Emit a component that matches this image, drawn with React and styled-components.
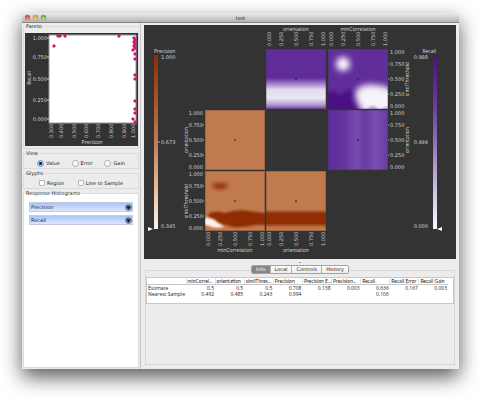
import React from "react";
import styled, { createGlobalStyle } from "styled-components";

const UI_FONT = '"DejaVu Sans", sans-serif';
const LABEL_FONT = '"Open Sans", sans-serif';

const GlobalStyle = createGlobalStyle`
  *, *::before, *::after { box-sizing: border-box; }
  html { background: #fff; }
  body {
    margin: 0;
    font: 5px/6px ${UI_FONT};
    color: #222;
  }
  button, input, select { font: inherit; color: inherit; margin: 0; padding: 0; }
`;

const Desktop = styled.div`
  min-height: 100vh;
  display: flex;
  padding: 13px 22px 31px;
`;

const Window = styled.div`
  flex: 1;
  min-width: 0;
  display: flex;
  flex-direction: column;
  background: #ececec;
  border-radius: 2px 2px 0 0;
  box-shadow: 0 8px 20px rgba(0, 0, 0, 0.66);
`;

const TitleBar = styled.header`
  height: 10px;
  display: grid;
  grid-template-columns: 1fr auto 1fr;
  align-items: center;
  padding: 0 3px;
  background: linear-gradient(#ececec, #b4b4b4);
  border-bottom: 1px solid #858585;
  border-radius: 2px 2px 0 0;
`;

const Lights = styled.div`
  display: flex;
  gap: 3px;
`;

const Light = styled.button`
  width: 5px;
  height: 5px;
  border: 0;
  border-radius: 50%;
  background: radial-gradient(circle at 50% 75%, ${(p) => p.$glow}, ${(p) => p.$color} 60%);
  box-shadow: 0 0 1px #444;
`;

const Title = styled.h1`
  margin: 0;
  font: 5px/8px ${UI_FONT};
`;

const Body = styled.div`
  flex: 1;
  display: grid;
  grid-template-columns: 119px minmax(0, 1fr);
`;

const Sidebar = styled.aside`
  display: flex;
  flex-direction: column;
  padding: 0 1px 1px;
  border-right: 1px solid #c6c6c6;
`;

const Group = styled.fieldset`
  min-width: 0;
  margin: 0 0 1px;
  border: 1px solid #dadada;
  padding: ${(p) => (p.$roomy ? "4px 0 2px 1px" : "3px 1px 1px")};
`;

const HistogramGroup = styled(Group)`
  flex: 1;
  margin: 0;
  background: #fff;
`;

const Legend = styled.legend`
  padding: 0 1px;
  line-height: 6px;
`;

const Choices = styled.div`
  display: flex;
  justify-content: space-between;
  padding: 0 ${(p) => p.$inset}px;
`;

const Choice = styled.label`
  display: flex;
  align-items: center;
  gap: 2px;
  height: 8px;
`;

const Radio = styled.input`
  appearance: none;
  width: 7px;
  height: 7px;
  border: 1px solid #aaa;
  border-radius: 50%;
  background: linear-gradient(#fff, #f2f2f2);
  &:checked {
    border-color: #6a94c6;
    background: radial-gradient(circle, #123 0 1px, #a8d4f8 2px);
  }
`;

const Check = styled.input`
  appearance: none;
  width: 6px;
  height: 6px;
  border: 1px solid #b4b4b4;
  border-radius: 1px;
  background: #fff;
  &:checked { background: #6ea8e8; }
`;

const ComboList = styled.div`
  display: flex;
  flex-direction: column;
  gap: 3px;
  padding: 3px 4px;
`;

const ComboBox = styled.div`
  position: relative;
`;

const Combo = styled.select`
  appearance: none;
  display: block;
  width: 100%;
  height: 10px;
  padding: 0 12px 0 1px;
  border: 1px solid #c2cbe2;
  border-radius: 0;
  background: linear-gradient(#a9c5fa, #dbe7ff);
`;

const ComboArrow = styled.svg`
  position: absolute;
  right: 1px;
  top: 2px;
  width: 7px;
  height: 7px;
  pointer-events: none;
`;

const Main = styled.main`
  display: flex;
  flex-direction: column;
  padding: 2px 3px 4px 3px;
`;

const Chart = styled.svg`
  display: block;
  width: 100%;
  height: auto;
  background: #333;
`;

const Splitter = styled.div`
  height: 6px;
  display: flex;
  justify-content: center;
  align-items: center;
  &::after {
    content: "";
    width: 2px;
    height: 1px;
    background: #999;
  }
`;

const TabArea = styled.section`
  flex: 1;
  display: flex;
  flex-direction: column;
  margin: 0 1px;
`;

const Tabs = styled.div`
  z-index: 1;
  align-self: center;
  display: flex;
  height: 9px;
  margin-bottom: -4px;
  border: 1px solid #a2a2a2;
  border-radius: 2px;
  overflow: hidden;
`;

const Tab = styled.button`
  padding: 0 4px;
  border: 0;
  border-left: 1px solid #b0b0b0;
  line-height: 7px;
  color: ${(p) => (p.$active ? "#fff" : "#222")};
  background: ${(p) => (p.$active ? "#858585" : "linear-gradient(#fff, #ececec)")};
  &:first-child { border-left: 0; }
`;

const TabPanel = styled.div`
  flex: 1;
  border: 1px solid #d6d6d6;
  padding-top: 6px;
`;

const TableFrame = styled.div`
  height: 27px;
  padding-right: 5px;
  background: #fff;
  border: 1px solid #c8c8c8;
`;

const Table = styled.table`
  width: 100%;
  table-layout: fixed;
  border-collapse: collapse;
  font: 5px/6px ${LABEL_FONT};
  color: #222;
  th, td { padding: 0 1px 0 0; font-weight: 400; white-space: nowrap; }
  thead th {
    height: 6px;
    padding: 0 0 0 1px;
    font-family: Lato, sans-serif;
    text-align: left;
    border-bottom: 1px solid #c8c8c8;
    border-left: 1px solid #e2e2e2;
  }
  thead th:first-child { width: 39px; border-left: 0; }
  tbody th { text-align: left; padding-left: 1px; }
  tbody td { text-align: right; }
`;

const Tick = styled.text`
  font: 5px ${UI_FONT};
  fill: #d4d4d4;
  text-anchor: ${(p) => p.$anchor || "start"};
`;

const AxisTitle = styled.text`
  font: 5px ${LABEL_FONT};
  fill: #dedede;
  text-anchor: ${(p) => p.$anchor || "middle"};
`;

const Dot = styled.path`
  fill: #d5106c;
`;

const UpText = ({ as: Kind = Tick, x, y, children, anchor }) => (
  <Kind $anchor={anchor} transform={`translate(${x + 2} ${y}) rotate(-90)`}>
    {children}
  </Kind>
);

const paretoX = [[26, "0.300"], [36, "0.400"], [49, "0.500"], [61, "0.600"], [73, "0.700"], [86, "0.800"], [99, "0.900"], [108, "1.000"]];
const paretoY = [[5, "1.000"], [24, "0.750"], [46, "0.500"], [67, "0.250"], [86, "0.000"]];
const samples = [
  [29, 13], [33, 3], [35, 3], [40, 3], [94, 3], [109, 5], [110, 7], [109, 9],
  [110, 11], [109, 13], [110, 15], [108, 17], [110, 21], [110, 26], [110, 42],
  [110, 46], [110, 68], [110, 76], [110, 80], [108, 86], [110, 89],
];

function ParetoChart() {
  return (
    <Chart viewBox="0 0 113 113" role="img" aria-label="Recall against Precision">
      <rect x="24" y="2" width="87" height="88" fill="#fff" stroke="#999" strokeWidth="1" />
      {paretoY.map(([y, t]) => (
        <g key={t}>
          <Tick $anchor="end" x="22" y={y + 2}>{t}</Tick>
          <path d={`M22 ${y}h2`} stroke="#ccc" />
        </g>
      ))}
      {paretoX.map(([x, t]) => <UpText key={t} x={x} y={105}>{t}</UpText>)}
      <UpText as={AxisTitle} x={4} y={45}>Recall</UpText>
      <AxisTitle x="67" y="111">Precision</AxisTitle>
      {samples.map(([x, y]) => (
        <Dot key={`${x}-${y}`} d={`M${x - 2} ${y}l1 -1l1 -1l1 1l1 1l-1 1l-1 1l-1 -1z`} />
      ))}
    </Chart>
  );
}

const ticks = ["0.000", "0.250", "0.500", "0.750", "1.000"];
const offsets = [3, 15, 30, 45, 57];

const ColumnAxis = ({ x, y, titleY, title }) => (
  <g>
    {ticks.map((t, i) => <UpText key={t} x={x + offsets[i]} y={y}>{t}</UpText>)}
    <AxisTitle x={x + 30} y={titleY}>{title}</AxisTitle>
  </g>
);

const RowAxis = ({ x, y, titleX, title, anchor }) => (
  <g>
    {ticks.map((t, i) => (
      <Tick key={t} $anchor={anchor} x={x} y={y + 62 - offsets[i]}>{t}</Tick>
    ))}
    {[15, 30, 45].map((d) => (
      <path key={d} d={`M${anchor === "end" ? x : x - 2} ${y + d}h1`} stroke="#aaa" />
    ))}
    <UpText as={AxisTitle} x={titleX} y={y + 30}>{title}</UpText>
  </g>
);

const Cell = ({ x, y, fill, children }) => (
  <g transform={`translate(${x} ${y})`}>
    <g clipPath="url(#cell)">
      <rect width="60" height="60" fill={fill} />
      {children}
    </g>
    <rect x="0.5" y="0.5" width="59" height="59" fill="none" stroke="#333" strokeOpacity="0.25" />
    <path d="M29 30h2M30 29v2" stroke="#222" strokeOpacity="0.6" />
  </g>
);

const Gradient = ({ id, horizontal, stops }) => (
  <linearGradient id={id} x1="0" y1="0" x2={horizontal ? 1 : 0} y2={horizontal ? 0 : 1}>
    {stops.map(([o, c]) => <stop key={o} offset={o} stopColor={c} />)}
  </linearGradient>
);

const Blur = ({ id, amount }) => (
  <filter id={id} x="-50%" y="-50%" width="200%" height="200%" colorInterpolationFilters="sRGB">
    <feGaussianBlur stdDeviation={amount} />
  </filter>
);

function ResponseMatrix() {
  return (
    <Chart viewBox="0 0 312 234" role="img" aria-label="Precision and Recall response matrix">
      <defs>
        <clipPath id="cell"><rect width="60" height="60" /></clipPath>
        <Blur id="soft" amount={3} />
        <Blur id="medium" amount={2} />
        <Blur id="crisp" amount={1} />
        <Gradient id="precisionBar" stops={[[0, "#8a2e06"], [0.3, "#ad5a31"], [0.5, "#c47a52"], [0.8, "#edc5a6"], [1, "#fff3e8"]]} />
        <Gradient id="recallBar" stops={[[0, "#48117f"], [0.3, "#6b3ea2"], [0.5, "#8f71b8"], [0.8, "#d3c9e2"], [1, "#fbf9fd"]]} />
        <Gradient id="recallBand" stops={[[0, "#602d9a"], [0.48, "#5f2c99"], [0.58, "#9f84c7"], [0.68, "#e3daef"], [0.82, "#ebe5f4"], [0.92, "#b9a4d8"], [1, "#7343ad"]]} />
        <Gradient id="recallWaves" horizontal stops={[[0, "#602d9a"], [0.28, "#6535a0"], [0.48, "#764dae"], [0.62, "#693aa4"], [0.78, "#784fb1"], [0.92, "#6e42a8"], [1, "#6939a2"]]} />
        <Gradient id="precisionBand" stops={[[0, "#c1794e"], [0.64, "#c1794e"], [0.71, "#912e04"], [0.87, "#902c02"], [0.94, "#bd7447"], [1, "#c37e50"]]} />
      </defs>

      <AxisTitle $anchor="start" x="10" y="28">Precision</AxisTitle>
      <rect x="10" y="30" width="4" height="174" fill="url(#precisionBar)" />
      <Tick x="17" y="34">1.000</Tick>
      <Tick x="17" y="119">0.673</Tick>
      <Tick x="17" y="203">0.345</Tick>
      <path d="M14 117h2" stroke="#aaa" />
      <path d="M4 202L9 204L4 206z" fill="#fff" />

      <AxisTitle $anchor="end" x="292" y="28">Recall</AxisTitle>
      <rect x="289" y="30" width="4" height="174" fill="url(#recallBar)" />
      <Tick $anchor="end" x="284" y="34">0.988</Tick>
      <Tick $anchor="end" x="284" y="119">0.494</Tick>
      <Tick $anchor="end" x="284" y="203">0.000</Tick>
      <path d="M298 202L293 204L298 206z" fill="#fff" />

      <ColumnAxis x={122} y={21} titleY={6} title="orientation" />
      <ColumnAxis x={184} y={21} titleY={6} title="minCorrelation" />
      <RowAxis x={246} y={24} titleX={263} title="similThreshold" />
      <RowAxis x={246} y={85} titleX={263} title="orientation" />
      <RowAxis x={59} y={85} titleX={42} title="orientation" anchor="end" />
      <RowAxis x={59} y={146} titleX={42} title="similThreshold" anchor="end" />
      <ColumnAxis x={61} y={221} titleY={227} title="minCorrelation" />
      <ColumnAxis x={122} y={221} titleY={227} title="orientation" />

      <Cell x={122} y={24} fill="url(#recallBand)" />
      <Cell x={184} y={24} fill="#602d9a">
        <g filter="url(#medium)">
          <path d="M-4 46Q5 38 12 47Q20 38 26 42L32 64H-4z" fill="#4a1085" />
        </g>
        <circle cx="15" cy="15" r="7" fill="#fff" filter="url(#soft)" />
        <path d="M30 39Q38 34 48 36Q56 36 68 42V70H40Q30 57 28 50Q26 43 30 39z" fill="#f6f3fa" filter="url(#soft)" />
        <path d="M38 61Q45 53 51 61M53 61Q58 55 64 61" fill="#b8a4d8" filter="url(#crisp)" />
      </Cell>
      <Cell x={184} y={85} fill="url(#recallWaves)" />
      <Cell x={61} y={85} fill="#c1794e" />
      <Cell x={61} y={146} fill="#c1794e">
        <ellipse cx="15" cy="15" rx="8" ry="3" fill="#902c02" filter="url(#medium)" />
        <g filter="url(#crisp)">
          <path d="M3 43Q10 39 20 42Q32 38 44 40Q54 41 64 43V54H50Q38 57 28 56L14 52L4 46z" fill="#902c02" />
          <path d="M-3 47Q8 46 12 51Q18 55 19 56Q9 58 4 55L-3 53z" fill="#fff4e8" />
        </g>
      </Cell>
      <Cell x={122} y={146} fill="url(#precisionBand)" />
    </Chart>
  );
}

const Histogram = ({ name }) => (
  <ComboBox>
    <Combo aria-label={`${name} histogram`} defaultValue={name}>
      <option>Precision</option>
      <option>Recall</option>
    </Combo>
    <ComboArrow viewBox="0 0 7 7" aria-hidden="true">
      <circle cx="3.5" cy="3.5" r="3" fill="#7d93bd" stroke="#4d6085" strokeWidth="0.7" />
      <path d="M1.3 2.2h4.4L3.5 5.7z" fill="#0b1220" />
    </ComboArrow>
  </ComboBox>
);

const headers = ["minCorrel...", "orientation", "similThres...", "Precision", "Precision E...", "Precision...", "Recall", "Recall Error", "Recall Gain"];
const rows = [
  ["Estimate", "0.5", "0.5", "0.5", "0.708", "0.138", "0.003", "0.636", "0.167", "0.003"],
  ["Nearest Sample", "0.492", "0.485", "0.243", "0.994", "", "", "0.106", "", ""],
];

export default function App() {
  return (
    <>
      <GlobalStyle />
      <Desktop>
        <Window>
          <TitleBar>
            <Lights>
              <Light aria-label="Close" $color="#d9433c" $glow="#ff9c92" />
              <Light aria-label="Minimize" $color="#dd9230" $glow="#ffe08a" />
              <Light aria-label="Zoom" $color="#6aa844" $glow="#c4f09a" />
            </Lights>
            <Title>test</Title>
          </TitleBar>
          <Body>
            <Sidebar>
              <Group $roomy>
                <Legend>Pareto</Legend>
                <ParetoChart />
              </Group>
              <Group>
                <Legend>View</Legend>
                <Choices $inset={12}>
                  <Choice><Radio type="radio" name="view" defaultChecked />Value</Choice>
                  <Choice><Radio type="radio" name="view" />Error</Choice>
                  <Choice><Radio type="radio" name="view" />Gain</Choice>
                </Choices>
              </Group>
              <Group>
                <Legend>Glyphs</Legend>
                <Choices $inset={14}>
                  <Choice><Check type="checkbox" />Region</Choice>
                  <Choice><Check type="checkbox" />Line to Sample</Choice>
                </Choices>
              </Group>
              <HistogramGroup>
                <Legend>Response Histograms</Legend>
                <ComboList>
                  <Histogram name="Precision" />
                  <Histogram name="Recall" />
                </ComboList>
              </HistogramGroup>
            </Sidebar>
            <Main>
              <ResponseMatrix />
              <Splitter />
              <TabArea>
                <Tabs role="tablist">
                  <Tab role="tab" aria-selected="true" $active>Info</Tab>
                  <Tab role="tab" aria-selected="false">Local</Tab>
                  <Tab role="tab" aria-selected="false">Controls</Tab>
                  <Tab role="tab" aria-selected="false">History</Tab>
                </Tabs>
                <TabPanel role="tabpanel">
                  <TableFrame>
                    <Table>
                      <thead>
                        <tr>
                          <th />
                          {headers.map((h) => <th key={h} scope="col">{h}</th>)}
                        </tr>
                      </thead>
                      <tbody>
                        {rows.map(([name, ...values]) => (
                          <tr key={name}>
                            <th scope="row">{name}</th>
                            {values.map((v, i) => <td key={i}>{v}</td>)}
                          </tr>
                        ))}
                      </tbody>
                    </Table>
                  </TableFrame>
                </TabPanel>
              </TabArea>
            </Main>
          </Body>
        </Window>
      </Desktop>
    </>
  );
}
